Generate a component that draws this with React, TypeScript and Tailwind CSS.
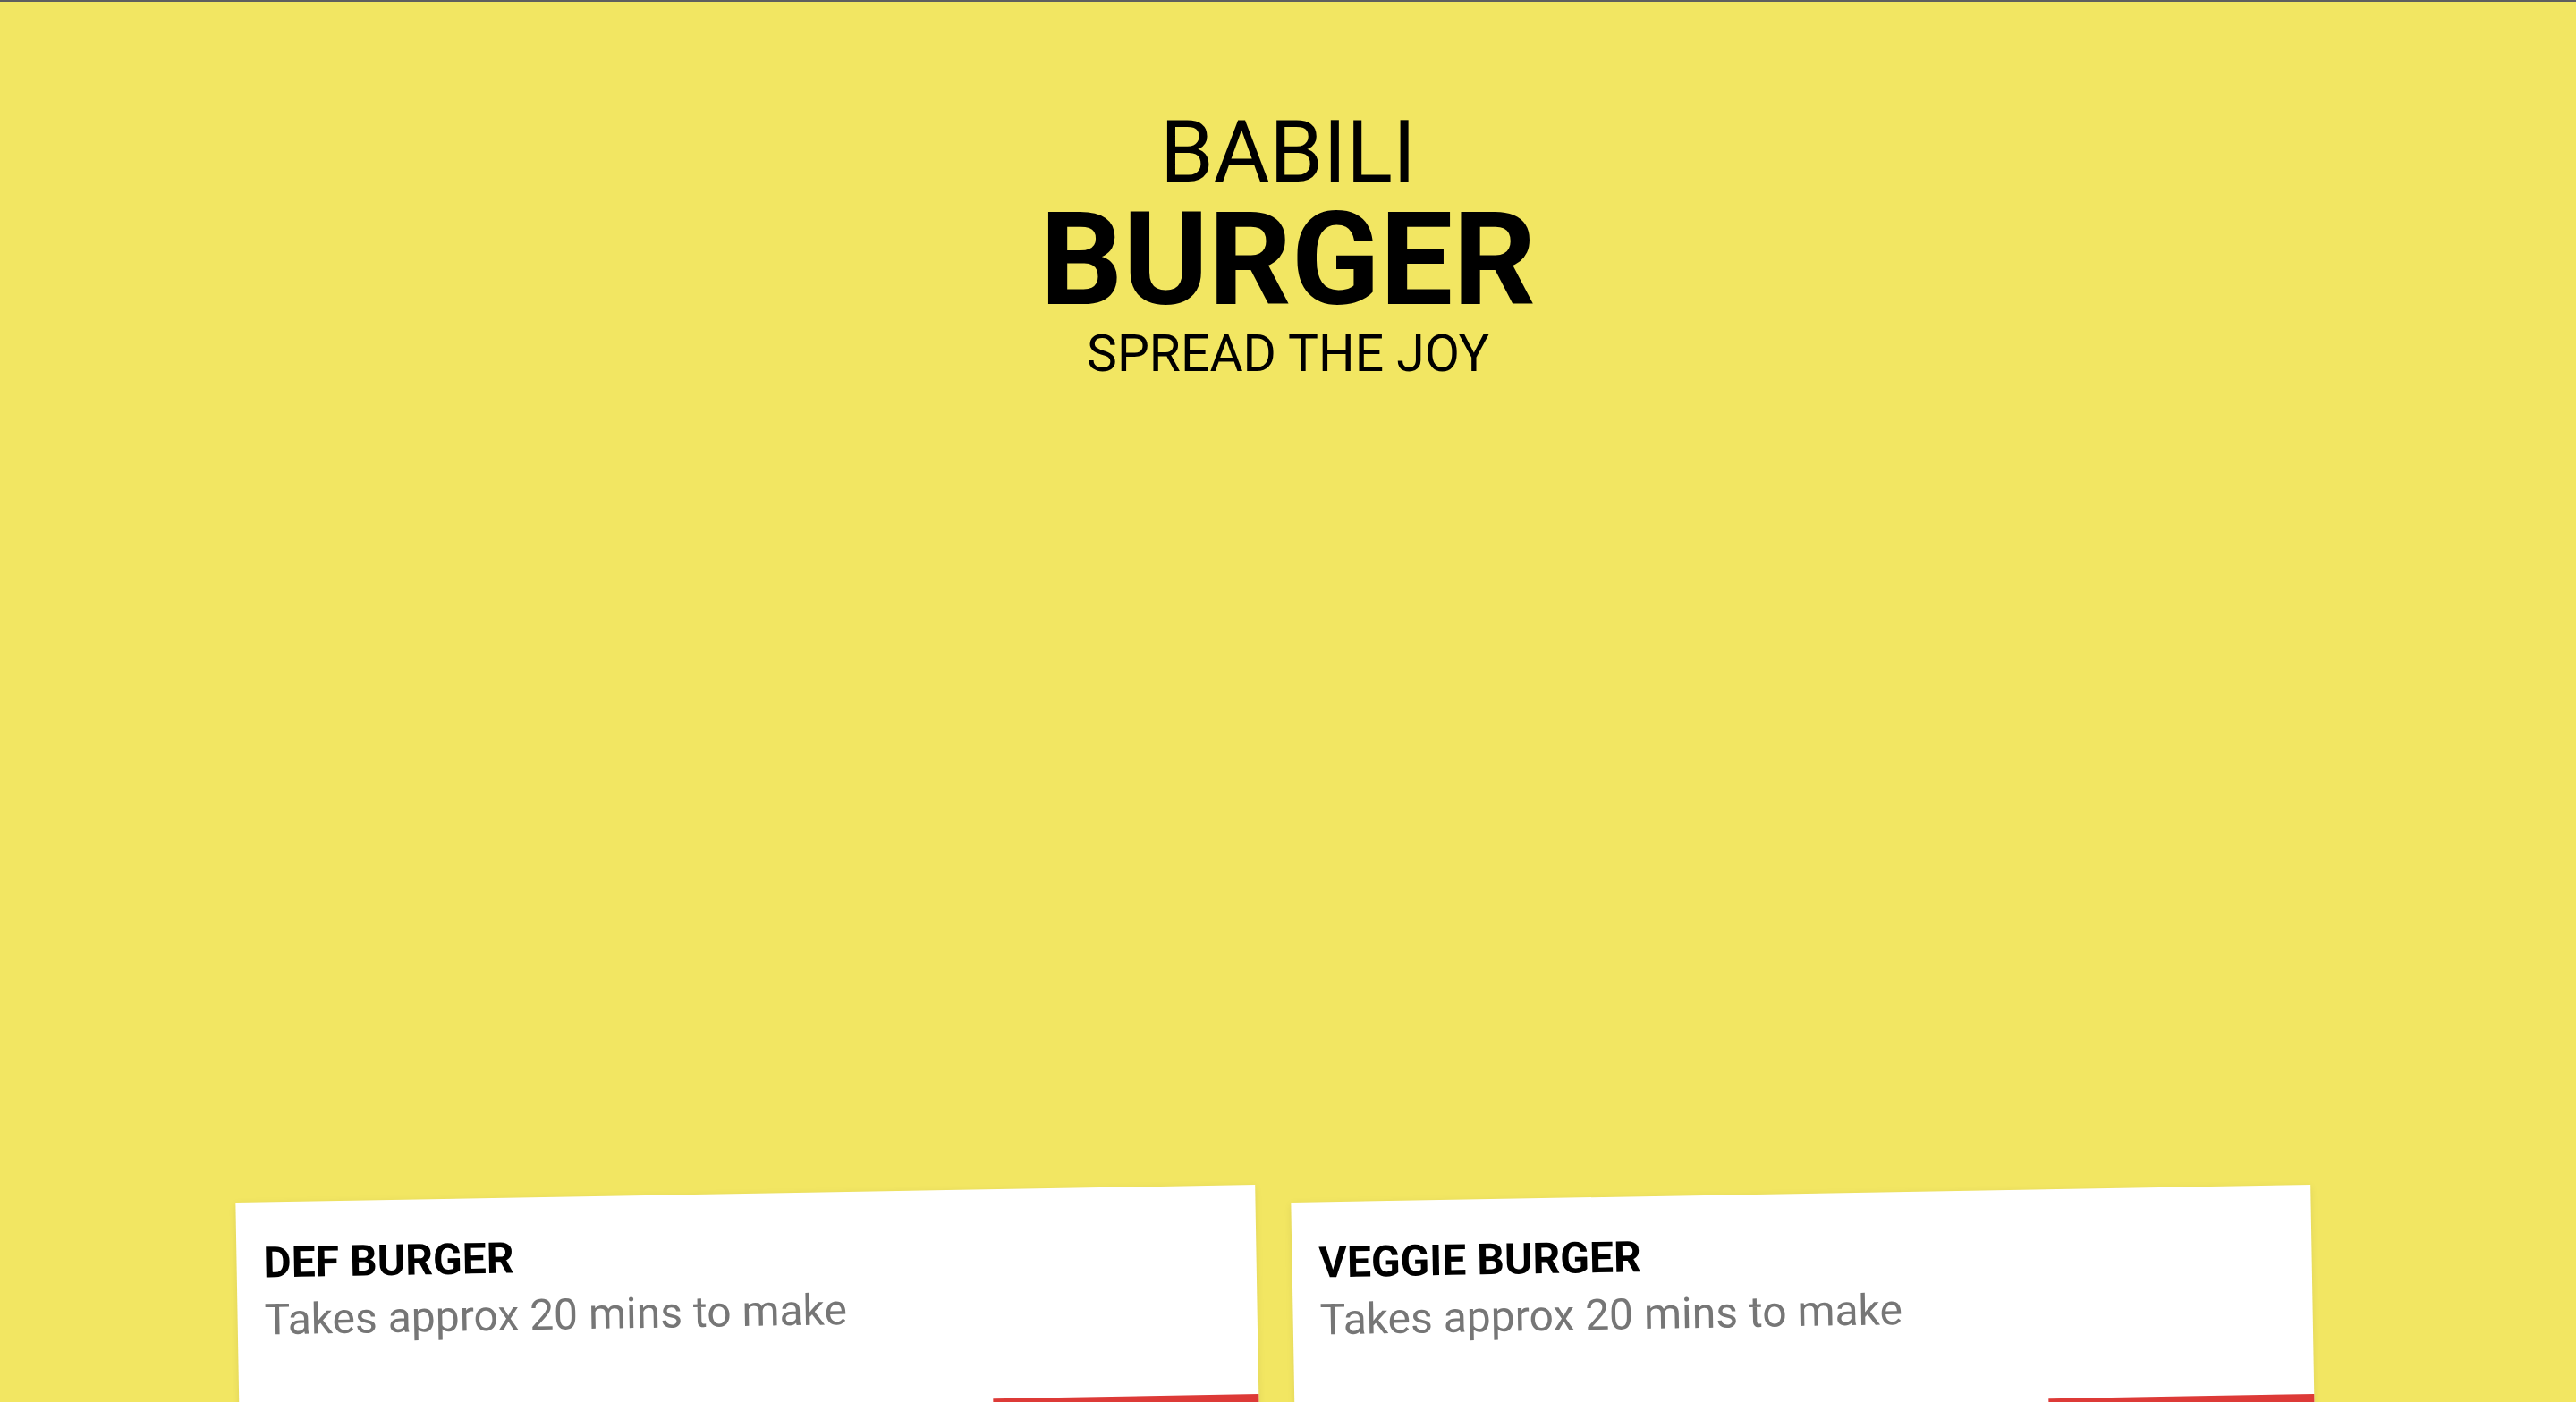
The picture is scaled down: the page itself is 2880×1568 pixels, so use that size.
const burgers = [
  { name: "DEF BURGER", time: "Takes approx 20 mins to make" },
  { name: "VEGGIE BURGER", time: "Takes approx 20 mins to make" },
];

function BurgerCard({ name, time }: { name: string; time: string }) {
  return (
    <div className="bg-white -rotate-1 shadow-[0_2px_8px_rgba(0,0,0,0.08)] flex flex-col">
      <div className="px-[30px] pt-[36px]">
        <h3 className="text-[48px] leading-[64px] font-bold text-black">{name}</h3>
        <p className="text-[48px] leading-[64px] text-[#767676]">{time}</p>
      </div>
      <div className="flex justify-end mt-[70px]">
        <div className="w-[297px] h-[80px] bg-[#dd3a37]"></div>
      </div>
    </div>
  );
}

export default function App() {
  return (
    <div
      className="min-h-screen bg-[#f2e662] border-t-2 border-[#5f5f5f] overflow-hidden"
      style={{ fontFamily: "Roboto, 'Liberation Sans', sans-serif" }}
    >
      <header className="flex flex-col items-center text-black pt-[120px]">
        <h2 className="text-[96px] leading-none font-normal">BABILI</h2>
        <h1 className="text-[145px] leading-none font-bold">BURGER</h1>
        <p className="text-[57px] leading-none mt-[4px]">SPREAD THE JOY</p>
      </header>

      <section className="grid grid-cols-2 gap-[40px] pl-[266px] pr-[294px] mt-[911px] pb-20">
        {burgers.map((b) => (
          <BurgerCard key={b.name} name={b.name} time={b.time} />
        ))}
      </section>
    </div>
  );
}
